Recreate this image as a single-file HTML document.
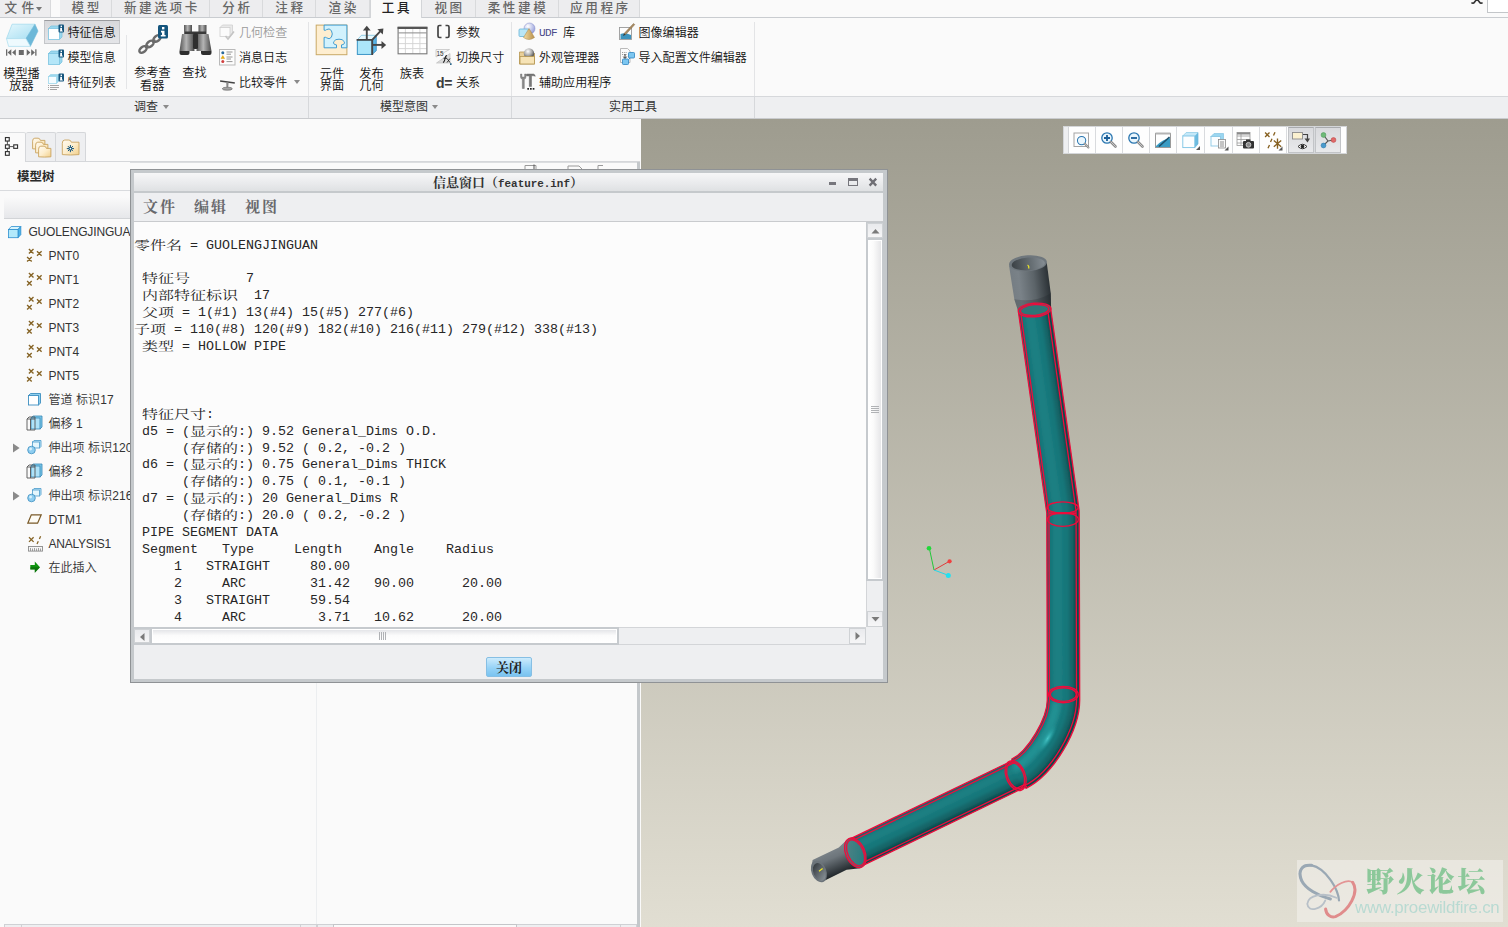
<!DOCTYPE html>
<html lang="zh-CN">
<head>
<meta charset="utf-8">
<title>信息窗口 (feature.inf)</title>
<style>
*{box-sizing:border-box;margin:0;padding:0}
html,body{width:1508px;height:927px;overflow:hidden;background:#fafafa}
body{position:relative;font-family:"Liberation Sans","Noto Sans CJK SC",sans-serif;font-size:12px;color:#1e1e1e}
.abs{position:absolute}
/* ---------- top tab bar ---------- */
#tabs{position:absolute;left:0;top:0;width:1508px;height:18px;background:#fafafa;border-bottom:1px solid #c9ccd0;z-index:2}
#tabs .t{position:absolute;top:0;height:17px;background:#ededef;border-right:1px solid #d9dadc;color:#666;font-size:12.6px;font-weight:500;line-height:16px;text-align:center;letter-spacing:2.6px;overflow:hidden;white-space:nowrap}
#tabs .t span{position:relative;top:0px;left:1.4px}
#tabs .t.on{background:#fafafa;color:#222;height:18px;border-left:1px solid #d3d5d8;border-right:1px solid #d3d5d8}
/* ---------- ribbon ---------- */
#ribbon{position:absolute;left:0;top:17px;width:1508px;height:80px;background:#fafafa}
#glabels{position:absolute;left:0;top:96px;width:1508px;height:23px;background:#eeeff1;border-top:1px solid #d6d8db;border-bottom:1px solid #c9cbce}
.gl{position:absolute;top:0;height:21px;line-height:20px;font-size:12px;color:#333;text-align:center;border-right:1px solid #d6d8db;white-space:nowrap}
.gsep{position:absolute;top:22px;width:1px;height:74px;background:#e3e4e6}
.rt{position:absolute;margin-top:1px;font-size:12.05px;line-height:12px;font-weight:350;color:#111;white-space:nowrap}
.rt.dis{color:#9a9a9a}
.rt2{position:absolute;margin-top:1px;font-size:12.2px;line-height:12.5px;font-weight:350;color:#111;text-align:center;white-space:nowrap}
.tri{position:absolute;width:0;height:0;border-left:4px solid transparent;border-right:4px solid transparent;border-top:4px solid #8a8a8a}
/* ---------- left panel ---------- */
#left{position:absolute;left:0;top:119px;width:641px;height:808px;background:#fafafa}
#split{position:absolute;left:637px;top:162px;width:3px;height:765px;background:#c4c8cb}
.ti{position:absolute;left:48px;font-size:12px;font-weight:350;margin-left:1px;line-height:16px;color:#333;white-space:nowrap}
/* ---------- viewport ---------- */
#view{position:absolute;left:641px;top:119px;width:867px;height:808px;background:linear-gradient(#9e9c8f,#e1ded2)}
/* ---------- dialog ---------- */

#dlg{position:absolute;left:130px;top:169px;width:758px;height:514px;background:#c5c9cc;border:1px solid #8f9295}
#dtitle{position:absolute;left:3px;top:3px;width:749px;height:18px;background:linear-gradient(#f6f6f7,#ebecee 50%,#dfe1e3);}
#dtitle .tt{position:absolute;left:-1px;width:750px;top:4px;text-align:center;font-family:"Liberation Mono","Noto Serif CJK SC",serif;font-weight:bold;font-size:13px;line-height:14px;color:#333;white-space:nowrap}
#dtitle .tt b{font-size:10.9px;letter-spacing:0}
#dmenu{position:absolute;left:3px;top:23px;width:749px;height:29px;background:#eeeff1;border-bottom:1px solid #c9cbce;font-family:"Noto Serif CJK SC","Liberation Serif",serif;font-weight:bold;font-size:15px;letter-spacing:2px;color:#68686c;line-height:28px;white-space:pre}
#dtext{position:absolute;left:3px;top:52px;width:732px;height:405px;background:#fcfcfc;overflow:hidden}
#dtext pre{position:absolute;left:0px;top:15.5px;font-family:"Liberation Mono","Noto Serif CJK SC",monospace;font-size:13.33px;line-height:16.92px;color:#262626;white-space:pre}
#dtext pre i{font-style:normal;display:inline-block;font-size:16px;line-height:16.92px;height:16.92px;vertical-align:top;font-weight:400;transform:scaleY(0.78);transform-origin:50% 78%;position:relative;top:0px}
#dbot{position:absolute;left:3px;top:457px;width:749px;height:52px;background:#eeeff1}
.sbtn{position:absolute;z-index:1;background:linear-gradient(#e9eaed,#f6f6f7);border:1px solid #cfd2d5}
#dmenu span{position:absolute;top:-1px}
#left svg{overflow:visible}
</style>
</head>
<body>
<div id="tabs">
<div class="t" style="left:0;width:50.5px;text-align:left;padding-left:3px;letter-spacing:4.4px"><span>文件</span><i class="tri" style="left:36px;top:6.5px;border-top-color:#777;border-left-width:3.5px;border-right-width:3.5px"></i></div>
<div class="t" style="left:59.5px;width:52.5px"><span>模型</span></div>
<div class="t" style="left:112px;width:98px"><span>新建选项卡</span></div>
<div class="t" style="left:210px;width:53px"><span>分析</span></div>
<div class="t" style="left:263px;width:53px"><span>注释</span></div>
<div class="t" style="left:316px;width:53.60000000000002px"><span>渲染</span></div>
<div class="t on" style="left:369.6px;width:52.099999999999966px"><span>工具</span></div>
<div class="t" style="left:421.7px;width:54.0px"><span>视图</span></div>
<div class="t" style="left:475.7px;width:82.90000000000003px"><span>柔性建模</span></div>
<div class="t" style="left:558.6px;width:81.89999999999998px"><span>应用程序</span></div>
<svg class="abs" style="left:1470px;top:0" width="14" height="6" viewBox="0 0 14 6"><path d="M1.5 2.5 Q3 4.5 5 1.5 L7 -1 L9 1.5 Q11 4.5 12.5 2.5" fill="none" stroke="#333" stroke-width="1.6"/></svg>
<div class="abs" style="left:1487px;top:-2px;width:30px;height:15px;background:#fff;border:1px solid #c3c6c9"></div>
</div>
<div id="ribbon">
<svg class="abs" style="left:5px;top:6px" width="34" height="34" viewBox="0 0 34 34"><defs><linearGradient id="gs1" x1="0" y1="0" x2="1" y2="1"><stop offset="0" stop-color="#e4f7fd"/><stop offset="1" stop-color="#a8dff2"/></linearGradient></defs>
<path d="M7.1 1.2 L30 1.2 L20.9 15.6 L1.5 15.6 Z" fill="url(#gs1)" stroke="#9fd9ec" stroke-width="0.7"/>
<path d="M30 1.2 L33 8.1 L25.4 23.4 L20.9 15.6 Z" fill="#6db8d8" stroke="#6db8d8" stroke-width="0.5"/>
<path d="M1.5 15.6 L20.9 15.6 L25.4 23.4 L3.6 23.4 Z" fill="#eefafe" stroke="#a8dcee" stroke-width="0.7"/>
<g fill="#6a6a6a"><rect x="1" y="26.3" width="1.3" height="6.4"/><path d="M6.3 26.3 L6.3 32.7 L2.6 29.5 Z"/><path d="M10.8 26.3 L10.8 32.7 L7.1 29.5 Z"/><rect x="13.8" y="27" width="5" height="5"/><path d="M21.7 26.3 L21.7 32.7 L25.4 29.5 Z"/><path d="M26.2 26.3 L26.2 32.7 L29.9 29.5 Z"/><rect x="30.2" y="26.3" width="1.3" height="6.4"/></g></svg>
<div class="rt2" style="left:-8.5px;width:60px;top:49.5px">模型播<br>放器</div>
<div class="abs" style="left:44px;top:3px;width:76px;height:24px;background:linear-gradient(#d7d8db,#e4e5e8);border:1px solid #c4c6c9;border-top:1px solid #9b9c9f"></div>
<svg class="abs" style="left:47px;top:6.5px" width="18" height="18" viewBox="0 0 18 18"><path d="M1.5 4.5 L4 2 L15 2 L15 13 L12.5 15.5 Z" fill="#9ad7ee" stroke="#7cc4e0" stroke-width="0.8"/><rect x="1.5" y="4.5" width="11" height="11" fill="#ffffff" stroke="#7cc4e0" stroke-width="0.8"/>
<rect x="11.5" y="0.5" width="5.5" height="8" rx="1" fill="#14557d"/><rect x="13.6" y="1.6" width="1.4" height="1.4" fill="#fff"/><rect x="13.2" y="3.8" width="1.8" height="3.2" fill="#fff"/><rect x="12.8" y="6.6" width="3" height="0.9" fill="#fff"/></svg>
<svg class="abs" style="left:47px;top:31.5px" width="18" height="18" viewBox="0 0 18 18"><path d="M1.5 4.5 L4 2 L15 2 L15 13 L12.5 15.5 Z" fill="#9ad7ee" stroke="#7cc4e0" stroke-width="0.8"/><rect x="1.5" y="4.5" width="11" height="11" fill="#b4e6f8" stroke="#7cc4e0" stroke-width="0.8"/>
<rect x="11.5" y="0.5" width="5.5" height="8" rx="1" fill="#14557d"/><rect x="13.6" y="1.6" width="1.4" height="1.4" fill="#fff"/><rect x="13.2" y="3.8" width="1.8" height="3.2" fill="#fff"/><rect x="12.8" y="6.6" width="3" height="0.9" fill="#fff"/></svg>
<svg class="abs" style="left:47px;top:56px" width="18" height="18" viewBox="0 0 18 18"><path d="M1.5 3.5 L3.5 1.5 L11.5 1.5 L11.5 8.5 L9.5 10.5 Z" fill="#9ad7ee" stroke="#9fd6ea" stroke-width="0.8"/><rect x="1.5" y="3.5" width="8" height="7" fill="#f4fcff" stroke="#9fd6ea" stroke-width="0.8"/>
<g stroke="#9a9a9a" stroke-width="0.9"><path d="M3 12.5 H12 M3 14.5 H12 M3 16.5 H10"/><path d="M1 12.5 H2 M1 14.5 H2 M1 16.5 H2"/></g>
<rect x="11.5" y="0.5" width="5.5" height="8" rx="1" fill="#14557d"/><rect x="13.6" y="1.6" width="1.4" height="1.4" fill="#fff"/><rect x="13.2" y="3.8" width="1.8" height="3.2" fill="#fff"/><rect x="12.8" y="6.6" width="3" height="0.9" fill="#fff"/></svg>
<div class="rt" style="left:67.5px;top:9px;">特征信息</div>
<div class="rt" style="left:67.5px;top:34px;">模型信息</div>
<div class="rt" style="left:67.5px;top:59px;">特征列表</div>
<div class="abs" style="left:126px;top:18px;width:1px;height:54px;background:#e4e5e7"></div>
<svg class="abs" style="left:137px;top:7px" width="32" height="32" viewBox="0 0 32 32"><g fill="none" stroke="#6b6b6b" stroke-width="2.4" stroke-linecap="round">
<ellipse cx="6" cy="25.5" rx="4.2" ry="2.6" transform="rotate(-38 6 25.5)"/>
<ellipse cx="13" cy="20" rx="4.2" ry="2.6" transform="rotate(-38 13 20)"/>
<ellipse cx="20" cy="14.5" rx="4.2" ry="2.6" transform="rotate(-38 20 14.5)"/>
<path d="M9 23 L10.5 22 M16 17.5 L17.5 16.5 M23 12 L25 8"/></g>
<rect x="21" y="1" width="10" height="13.5" rx="1.5" fill="#14557d"/><rect x="25" y="3" width="2.4" height="2.4" fill="#fff"/><path d="M24 6.8 H27.5 V11 H28.6 V12.6 H23.8 V11 H25 V8.4 H24 Z" fill="#fff"/></svg>
<div class="rt2" style="left:122.30000000000001px;width:60px;top:49px">参考查<br>看器</div>
<svg class="abs" style="left:179px;top:7px" width="33" height="32" viewBox="0 0 33 32"><defs><linearGradient id="gb1" x1="0" y1="0" x2="1" y2="0"><stop offset="0" stop-color="#555"/><stop offset="0.45" stop-color="#b4b4b4"/><stop offset="1" stop-color="#4a4a4a"/></linearGradient></defs>
<rect x="5" y="1" width="8" height="9" fill="url(#gb1)"/><rect x="19.5" y="1" width="8" height="9" fill="url(#gb1)"/>
<rect x="6" y="7.5" width="21" height="3" fill="#3a3a3a"/>
<path d="M3 10 L14 10 L15.5 27 L0.5 27 Z" fill="url(#gb1)"/><path d="M18.5 10 L29.5 10 L32.5 27 L17.5 27 Z" fill="url(#gb1)"/>
<rect x="14" y="9" width="5" height="16" rx="1.5" fill="#2f2f2f"/>
<path d="M0.5 27 H10.5 V29 Q10.5 31 8.5 31 H2.5 Q0.5 31 0.5 29 Z" fill="#2e2e2e"/><path d="M22 27 H32.5 V29 Q32.5 31 30.5 31 H24 Q22 31 22 29 Z" fill="#2e2e2e"/></svg>
<div class="rt2" style="left:164.5px;width:60px;top:49px">查找</div>
<svg class="abs" style="left:219px;top:7px" width="17" height="17" viewBox="0 0 17 17"><path d="M1 3.5 L3.5 1 L13.5 1 L13.5 10 L11 12.5 Z" fill="#e9e9e9" stroke="#cfcfcf" stroke-width="0.8"/><rect x="1" y="3.5" width="10" height="9" fill="#fbfbfb" stroke="#cfcfcf" stroke-width="0.8"/><path d="M6.5 12 L9 15 L15 7.5" fill="none" stroke="#c4c4c4" stroke-width="1.6"/></svg>
<div class="rt dis" style="left:239px;top:9px;">几何检查</div>
<svg class="abs" style="left:219px;top:32px" width="17" height="17" viewBox="0 0 17 17"><rect x="0.5" y="0.5" width="15.5" height="15.5" fill="#fdfdfd" stroke="#b9b9b9"/><circle cx="3.8" cy="3.8" r="1.5" fill="#2a6a9a"/><path d="M2 9.6 L3.8 6.6 L5.6 9.6 Z" fill="#f0b000" stroke="#c88a00" stroke-width="0.4"/><circle cx="3.8" cy="12.6" r="1.5" fill="#d04040"/><g stroke="#8a8a8a" stroke-width="0.9"><path d="M7.5 3 H13.5 M7.5 5.2 H12 M7.5 8 H13.5 M7.5 10 H12 M7.5 12.6 H13.5"/></g></svg>
<div class="rt" style="left:239px;top:34px;">消息日志</div>
<svg class="abs" style="left:219px;top:60px" width="17" height="14" viewBox="0 0 17 14"><path d="M1.1 3.9 L15.8 6.1" stroke="#444" stroke-width="1.5"/><path d="M7.2 5 L9.6 5.4 L9.2 10.8 H7.5 Z" fill="#8a8a8a"/><ellipse cx="8.3" cy="11.7" rx="5" ry="1.5" fill="#a4a4a4" stroke="#6a6a6a" stroke-width="0.7"/></svg>
<div class="rt" style="left:239px;top:59px;">比较零件</div>
<i class="tri" style="left:293.5px;top:63px;border-left-width:3.5px;border-right-width:3.5px"></i>
<svg class="abs" style="left:315px;top:7px" width="33" height="33" viewBox="0 0 33 33"><rect x="1.2" y="1.1" width="30.7" height="29.6" fill="#feeed0" stroke="#c9a866" stroke-width="1"/>
<path d="M9.1 1.1 H31.9 V23.8 H26.5 V20.9 Q30.4 20.4 29.2 17.6 Q27.6 14.9 24 15.2 Q20.4 14.9 18.8 17.6 Q17.6 20.4 21.5 20.9 V23.8 H9.1 V13.4 Q11 13 11.6 13.8 Q14.2 16 16.4 13.2 Q18.2 10 16.4 6.6 Q14.2 3.8 11.6 5.6 Q11 6.6 9.1 6.2 Z" fill="#d2f2fd" stroke="#2f94d0" stroke-width="0.9"/></svg>
<div class="rt2" style="left:302px;width:60px;top:49.5px">元件<br>界面</div>
<svg class="abs" style="left:356px;top:8px" width="31" height="31" viewBox="0 0 31 31"><path d="M1.3 14.9 L5.4 10.3 L20.3 10.3 L16.2 14.9 Z" fill="#e6f8fe" stroke="#6ab9da" stroke-width="0.7"/><path d="M16.2 14.9 L20.3 10.6 L20.3 25.7 L16.2 29.4 Z" fill="#5ab4e6" stroke="#2a82b8" stroke-width="0.7"/><rect x="1.3" y="14.9" width="14.9" height="14.5" fill="#ace6fa" stroke="#2a8ac0" stroke-width="0.9"/>
<g stroke="#454545" stroke-width="1.9" fill="none"><path d="M0.6 14.9 H16.2 V30"/><path d="M10.8 14.9 V4.5"/><path d="M16.2 14.9 L24.2 6.4"/><path d="M16.2 19.9 H26.5"/></g>
<g fill="#454545"><path d="M6.9 5.6 L10.8 0.8 L14.7 5.6 Z"/><path d="M21.4 4.3 L27.4 3.5 L26.8 9.6 Z"/><path d="M25.5 15.9 L30.2 19.9 L25.5 23.9 Z"/></g></svg>
<div class="rt2" style="left:341.5px;width:60px;top:49.5px">发布<br>几何</div>
<svg class="abs" style="left:397px;top:9px" width="31" height="29" viewBox="0 0 31 29"><rect x="1.1" y="1.3" width="28.8" height="26.5" fill="#fff"/><g stroke="#d2d2d2" stroke-width="0.9"><path d="M1.5 11.8 H29.5 M1.5 17.6 H29.5 M1.5 22.6 H29.5 M8.4 2 V27.5 M15.8 2 V27.5 M22.9 2 V27.5"/></g><path d="M1.5 6.9 H29.5" stroke="#8a8a8a" stroke-width="1"/><rect x="1.1" y="1.3" width="28.8" height="26.5" fill="none" stroke="#787878" stroke-width="1.1"/><rect x="0.6" y="0.8" width="29.8" height="2.2" fill="#555"/></svg>
<div class="rt2" style="left:382px;width:60px;top:49.5px">族表</div>
<svg class="abs" style="left:436px;top:7px" width="16" height="16" viewBox="0 0 16 16"><path d="M5.5 1.5 H3.5 Q2 1.5 2 3 V12 Q2 13.5 3.5 13.5 H5.5 M9.5 1.5 H11.5 Q13 1.5 13 3 V12 Q13 13.5 11.5 13.5 H9.5" fill="none" stroke="#444" stroke-width="1.7"/></svg>
<div class="rt" style="left:456px;top:9px;">参数</div>
<svg class="abs" style="left:435px;top:31px" width="18" height="18" viewBox="0 0 18 18"><path d="M1 1.5 H14.5 L1 9 Z" fill="#f6f6f6" stroke="#bdbdbd" stroke-width="0.7"/><path d="M15 5.5 V15 H1.5 Z" fill="#dcdcdc" stroke="#bdbdbd" stroke-width="0.7"/><text x="1.6" y="8" font-size="7.5" font-family="Liberation Sans,sans-serif" fill="#333" textLength="7" lengthAdjust="spacingAndGlyphs">15</text><path d="M8 14.5 Q9.5 14 10 10.5 Q10.5 7.5 12 7.5 M8.6 10.2 H12" stroke="#222" stroke-width="1.1" fill="none"/><path d="M12 10.5 L15 14.5 M15 10.5 L12 14.5" stroke="#222" stroke-width="0.9"/><rect x="15" y="15.3" width="1.6" height="1.6" fill="#14557d"/></svg>
<div class="rt" style="left:456px;top:34px;">切换尺寸</div>
<div class="rt" style="left:436px;top:58px;font-family:'Liberation Sans',sans-serif;font-weight:bold;font-size:14px;line-height:14px;letter-spacing:-0.3px;color:#3c3c3c">d=</div>
<div class="rt" style="left:456px;top:59px;">关系</div>
<svg class="abs" style="left:518px;top:5px" width="19" height="19" viewBox="0 0 19 19"><defs><radialGradient id="gsph" cx="0.35" cy="0.3" r="0.8"><stop offset="0" stop-color="#fff"/><stop offset="1" stop-color="#8c96d8"/></radialGradient><linearGradient id="gcone" x1="0" y1="0" x2="1" y2="0"><stop offset="0" stop-color="#f3dca4"/><stop offset="1" stop-color="#b8904a"/></linearGradient></defs>
<circle cx="11.5" cy="6.5" r="5.5" fill="url(#gsph)" stroke="#8088c8" stroke-width="0.5"/><rect x="1" y="7" width="10" height="7.5" rx="1" fill="#b9e6f7" stroke="#68b4d8" stroke-width="0.8"/><path d="M11 6.5 L16.5 15.5 Q11 19.5 5.5 15.5 Z" fill="url(#gcone)" stroke="#a88444" stroke-width="0.5"/></svg>
<div class="rt" style="left:539px;top:9px;font-family:'Liberation Mono','Noto Serif CJK SC',monospace;font-size:11px;letter-spacing:-0.6px;color:#4a4a8a">UDF</div>
<div class="rt" style="left:563px;top:9px;">库</div>
<svg class="abs" style="left:518px;top:30px" width="19" height="19" viewBox="0 0 19 19"><defs><radialGradient id="gsp2" cx="0.4" cy="0.3" r="0.75"><stop offset="0" stop-color="#fff"/><stop offset="0.5" stop-color="#aaa"/><stop offset="1" stop-color="#333"/></radialGradient></defs>
<path d="M1.5 5 H7 L8 6.5 H16.5 V17 H1.5 Z" fill="#e9cf98" stroke="#b59650" stroke-width="0.8"/><circle cx="11" cy="6.5" r="5.2" fill="url(#gsp2)"/><rect x="2" y="9.5" width="14.5" height="7.5" fill="#f6e3b6" stroke="#b59650" stroke-width="0.8"/></svg>
<div class="rt" style="left:539px;top:34px;">外观管理器</div>
<svg class="abs" style="left:518px;top:55px" width="19" height="19" viewBox="0 0 19 19"><path d="M2.5 2 V5 Q2.5 7 4.3 7 V16.5 H6.3 V7 Q8 7 8 5 V2 H6.6 V5 H3.9 V2 Z" fill="#8a8a8a" stroke="#666" stroke-width="0.4"/><path d="M8.5 2 H15.5 Q17 2.3 17.3 4.3 L15.5 3.8 H13.5 V14.5 H11.3 V4 H8.5 Z" fill="#777" stroke="#555" stroke-width="0.4"/><g fill="#222"><rect x="9.3" y="16" width="1.7" height="1.7"/><rect x="12" y="16" width="1.7" height="1.7"/><rect x="14.7" y="16" width="1.7" height="1.7"/></g></svg>
<div class="rt" style="left:539px;top:59px;">辅助应用程序</div>
<svg class="abs" style="left:618px;top:5px" width="19" height="19" viewBox="0 0 19 19"><rect x="1.5" y="5.5" width="12" height="12" fill="#fdfdfd" stroke="#9a9a9a" stroke-width="0.9"/><path d="M2.5 12 Q7 10 13 13 V17 H2.5 Z" fill="#3b93bd"/><path d="M6 11.5 L15.5 1.5 L16.8 2.6 L7.5 12.8 Z" fill="#a98a60" stroke="#6d5636" stroke-width="0.4"/><path d="M6 11.5 L7.5 12.8 L5 14 Z" fill="#333"/></svg>
<div class="rt" style="left:638.5px;top:9px;">图像编辑器</div>
<svg class="abs" style="left:618px;top:30px" width="19" height="19" viewBox="0 0 19 19"><path d="M2.5 1.5 H9.5 L12 4 V15.5 H2.5 Z" fill="#fbfbfb" stroke="#a9a9a9" stroke-width="0.8"/><g stroke="#888" stroke-width="0.8" stroke-dasharray="1.2 1"><path d="M4 5.5 H9 M4 7.5 H9"/></g><path d="M7 7 V11 M5.3 9.6 L7 11.6 L8.7 9.6" stroke="#333" stroke-width="1" fill="none"/><rect x="10.5" y="5.5" width="6" height="5.5" rx="0.8" fill="#7cc6f0" stroke="#2d84c0" stroke-width="0.8"/><rect x="4.5" y="12" width="6" height="5.5" rx="0.8" fill="#7cc6f0" stroke="#2d84c0" stroke-width="0.8"/><path d="M10.5 12.5 L12 11" stroke="#2d84c0" stroke-width="0.8"/></svg>
<div class="rt" style="left:638.5px;top:34px;">导入配置文件编辑器</div>
<div class="gsep" style="left:308px;top:5px"></div>
<div class="gsep" style="left:511px;top:5px"></div>
<div class="gsep" style="left:754px;top:5px"></div>
</div>
<div id="glabels">
<div class="gl" style="left:0;width:309px"><span style="position:relative;left:-8px">调查</span><i class="tri" style="left:162.5px;top:8px;border-left-width:3.5px;border-right-width:3.5px"></i></div>
<div class="gl" style="left:309px;width:203px"><span style="position:relative;left:-6px">模型意图</span><i class="tri" style="left:122.5px;top:8px;border-left-width:3.5px;border-right-width:3.5px"></i></div>
<div class="gl" style="left:512px;width:243px">实用工具</div>
</div>
<div id="left">
<div class="abs" style="left:0px;top:42px;width:640px;height:1px;background:#d5d7da"></div>
<div class="abs" style="left:0px;top:13px;width:26px;height:30px;background:#fafafa;border-right:1px solid #d5d7da;border-top:1px solid #dcdee0;border-radius:0 2px 0 0"></div>
<div class="abs" style="left:26px;top:13px;width:30px;height:29px;background:#eeeff1;border:1px solid #d5d7da;border-bottom:none;border-left:none;border-radius:2px 2px 0 0"></div>
<div class="abs" style="left:56px;top:13px;width:30px;height:29px;background:#eeeff1;border:1px solid #d5d7da;border-bottom:none;border-left:none;border-radius:2px 2px 0 0"></div>
<svg class="abs" style="left:4px;top:17px" width="16" height="22" viewBox="0 0 16 22"><path d="M3.4 5 V8.8 M3.4 12.4 V15.6 M5.8 10.6 H9.2" stroke="#555" stroke-width="1"/><g fill="#fff" stroke="#333" stroke-width="1.15"><rect x="1.45" y="1.55" width="3.8" height="3.5"/><rect x="1.45" y="8.85" width="3.8" height="3.5"/><rect x="1.45" y="15.6" width="3.8" height="3.7"/><rect x="9.75" y="8.85" width="3.8" height="3.5"/></g></svg>
<svg class="abs" style="left:31px;top:18px" width="22" height="22" viewBox="0 0 22 22"><defs><linearGradient id="gfo" x1="0" y1="0" x2="1" y2="1"><stop offset="0" stop-color="#fffaf0"/><stop offset="0.5" stop-color="#fdeecd"/><stop offset="1" stop-color="#f1cf8a"/></linearGradient></defs><path d="M1.6 4.2 Q1.6 1.2 3.8000000000000003 1.2 H7.1 Q8.9 1.2 9.4 3.4000000000000004 H13.9 V11.799999999999999 Q7.6 12.399999999999999 1.6 11.799999999999999 Z" fill="url(#gfo)" stroke="#c9a460" stroke-width="0.9"/><path d="M4.6 8.2 Q4.6 5.2 6.8 5.2 H10.1 Q11.899999999999999 5.2 12.399999999999999 7.4 H16.9 V15.8 Q10.6 16.4 4.6 15.8 Z" fill="url(#gfo)" stroke="#c9a460" stroke-width="0.9"/><path d="M7.6 12.2 Q7.6 9.2 9.8 9.2 H13.1 Q14.899999999999999 9.2 15.399999999999999 11.399999999999999 H19.9 V19.799999999999997 Q13.6 20.4 7.6 19.799999999999997 Z" fill="url(#gfo)" stroke="#c9a460" stroke-width="0.9"/></svg>
<svg class="abs" style="left:61px;top:20px" width="20" height="18" viewBox="0 0 20 18"><path d="M1.3 4.2 Q1.3 1 3.8 1 H7.8 Q9.8 1 10.3 3.2 H18 V15.6 Q9.5 16.4 1.3 15.6 Z" fill="url(#gfo)" stroke="#c9a460" stroke-width="0.9"/><g stroke="#14557d" stroke-width="1"><path d="M9.4 6 V13.2 M5.8 9.6 H13 M6.9 7.1 L11.9 12.1 M11.9 7.1 L6.9 12.1"/></g><circle cx="9.4" cy="9.6" r="1.9" fill="#14557d"/><circle cx="9.4" cy="9.6" r="0.9" fill="#fff"/></svg>
<div class="abs" style="left:17px;top:51px;font-size:12.5px;line-height:14px;font-weight:bold;color:#2a2a2a;font-family:'Liberation Sans','Noto Sans CJK SC',sans-serif">模型树</div>
<div class="abs" style="left:130px;top:43px;width:507px;height:1px;background:#dcdee0"></div>
<svg class="abs" style="left:524px;top:45px" width="80" height="6" viewBox="0 0 80 6"><g fill="none" stroke="#9a9a9a" stroke-width="1"><path d="M1 5 V1.5 H12 V5"/><path d="M10 0.5 V5" stroke="#555"/><path d="M44 5 V2 H55 L58 5"/><path d="M74 5 V1.5 H79"/></g></svg>
<div class="abs" style="left:0px;top:71px;width:637px;height:1px;background:#d9dbde"></div>
<div class="abs" style="left:4px;top:78px;width:633px;height:22px;background:linear-gradient(#fafafa,#e6e7ea);border-bottom:1px solid #d2d4d7"></div>
<svg class="abs" style="left:7px;top:104px" width="17" height="16" viewBox="0 0 17 16"><path d="M1.5 6.5 L4.2 3.5 L13.8 3.5 L11 6.5 Z" fill="#d6f4fd" stroke="#2d8fcf" stroke-width="0.8"/><path d="M11 6.5 L13.8 3.5 L13.8 11.7 L11 14.7 Z" fill="#4db4e8" stroke="#2d8fcf" stroke-width="0.8"/><rect x="1.5" y="6.5" width="9.5" height="8.2" fill="#b2e9fb" stroke="#2d8fcf" stroke-width="0.8"/></svg>
<div class="ti" style="left:27.4px;top:105px;letter-spacing:-0.15px">GUOLENGJINGUAN</div>
<svg class="abs" style="left:26px;top:128px" width="17" height="16" viewBox="0 0 17 16"><path d="M2.9000000000000004 1.9000000000000004 L7.5 6.5 M7.5 1.9000000000000004 L2.9000000000000004 6.5 M11.0 4.2 L15.600000000000001 8.8 M15.600000000000001 4.2 L11.0 8.8 M1.1 10.0 L5.699999999999999 14.600000000000001 M5.699999999999999 10.0 L1.1 14.600000000000001" stroke="#866426" stroke-width="1.35" fill="none"/></svg>
<div class="ti" style="left:47.4px;top:129px;letter-spacing:0">PNT0</div>
<svg class="abs" style="left:26px;top:152px" width="17" height="16" viewBox="0 0 17 16"><path d="M2.9000000000000004 1.9000000000000004 L7.5 6.5 M7.5 1.9000000000000004 L2.9000000000000004 6.5 M11.0 4.2 L15.600000000000001 8.8 M15.600000000000001 4.2 L11.0 8.8 M1.1 10.0 L5.699999999999999 14.600000000000001 M5.699999999999999 10.0 L1.1 14.600000000000001" stroke="#866426" stroke-width="1.35" fill="none"/></svg>
<div class="ti" style="left:47.4px;top:153px;letter-spacing:0">PNT1</div>
<svg class="abs" style="left:26px;top:176px" width="17" height="16" viewBox="0 0 17 16"><path d="M2.9000000000000004 1.9000000000000004 L7.5 6.5 M7.5 1.9000000000000004 L2.9000000000000004 6.5 M11.0 4.2 L15.600000000000001 8.8 M15.600000000000001 4.2 L11.0 8.8 M1.1 10.0 L5.699999999999999 14.600000000000001 M5.699999999999999 10.0 L1.1 14.600000000000001" stroke="#866426" stroke-width="1.35" fill="none"/></svg>
<div class="ti" style="left:47.4px;top:177px;letter-spacing:0">PNT2</div>
<svg class="abs" style="left:26px;top:200px" width="17" height="16" viewBox="0 0 17 16"><path d="M2.9000000000000004 1.9000000000000004 L7.5 6.5 M7.5 1.9000000000000004 L2.9000000000000004 6.5 M11.0 4.2 L15.600000000000001 8.8 M15.600000000000001 4.2 L11.0 8.8 M1.1 10.0 L5.699999999999999 14.600000000000001 M5.699999999999999 10.0 L1.1 14.600000000000001" stroke="#866426" stroke-width="1.35" fill="none"/></svg>
<div class="ti" style="left:47.4px;top:201px;letter-spacing:0">PNT3</div>
<svg class="abs" style="left:26px;top:224px" width="17" height="16" viewBox="0 0 17 16"><path d="M2.9000000000000004 1.9000000000000004 L7.5 6.5 M7.5 1.9000000000000004 L2.9000000000000004 6.5 M11.0 4.2 L15.600000000000001 8.8 M15.600000000000001 4.2 L11.0 8.8 M1.1 10.0 L5.699999999999999 14.600000000000001 M5.699999999999999 10.0 L1.1 14.600000000000001" stroke="#866426" stroke-width="1.35" fill="none"/></svg>
<div class="ti" style="left:47.4px;top:225px;letter-spacing:0">PNT4</div>
<svg class="abs" style="left:26px;top:248px" width="17" height="16" viewBox="0 0 17 16"><path d="M2.9000000000000004 1.9000000000000004 L7.5 6.5 M7.5 1.9000000000000004 L2.9000000000000004 6.5 M11.0 4.2 L15.600000000000001 8.8 M15.600000000000001 4.2 L11.0 8.8 M1.1 10.0 L5.699999999999999 14.600000000000001 M5.699999999999999 10.0 L1.1 14.600000000000001" stroke="#866426" stroke-width="1.35" fill="none"/></svg>
<div class="ti" style="left:47.4px;top:249px;letter-spacing:0">PNT5</div>
<svg class="abs" style="left:26px;top:272px" width="17" height="16" viewBox="0 0 17 16"><path d="M2.5 4.5 L4.5 2.5 L14.5 2.5 L14.5 12 L12.5 14 Z" fill="#8fd0ee" stroke="#3d8fc0" stroke-width="0.9"/><rect x="2.5" y="4.5" width="10" height="9.5" fill="#fff" stroke="#3d8fc0" stroke-width="0.9"/></svg>
<div class="ti" style="left:47.4px;top:273px;letter-spacing:0.1px">管道 标识17</div>
<svg class="abs" style="left:26px;top:296px" width="17" height="16" viewBox="0 0 17 16"><path d="M5 3 L7 1 L16 1 L16 12 L14 14 Z" fill="#7ecbec" stroke="#3585b5" stroke-width="0.8"/><rect x="5" y="3" width="9" height="11" fill="#aee2f8" stroke="#3585b5" stroke-width="0.8"/><path d="M1 4 L3 2 H9 M1 4 V15 H9 M1 4 H9 M4.5 4 V15 M9 2 V15" fill="none" stroke="#555" stroke-width="0.9"/></svg>
<div class="ti" style="left:47.4px;top:297px;letter-spacing:0.1px">偏移 1</div>
<svg class="abs" style="left:26px;top:320px" width="17" height="16" viewBox="0 0 17 16"><path d="M6.5 3 L8 1.5 H15 V7.5 L13.5 9 Z" fill="#bfe6f8" stroke="#4a9aca" stroke-width="0.8"/><rect x="6.5" y="3" width="7" height="6" fill="#e4f6fd" stroke="#4a9aca" stroke-width="0.8"/><circle cx="5.5" cy="11" r="3.8" fill="#8ecdf0" stroke="#3d8fc0" stroke-width="0.8"/><circle cx="4.6" cy="10" r="1.4" fill="#d8f0fb"/></svg>
<div class="ti" style="left:47.4px;top:321px;letter-spacing:0.1px">伸出项 标识120</div>
<svg class="abs" style="left:11px;top:324px" width="9" height="10" viewBox="0 0 9 10"><path d="M2 0.6 L8.6 5 L2 9.4 Z" fill="#8a8a8a"/></svg>
<svg class="abs" style="left:26px;top:344px" width="17" height="16" viewBox="0 0 17 16"><path d="M5 3 L7 1 L16 1 L16 12 L14 14 Z" fill="#7ecbec" stroke="#3585b5" stroke-width="0.8"/><rect x="5" y="3" width="9" height="11" fill="#aee2f8" stroke="#3585b5" stroke-width="0.8"/><path d="M1 4 L3 2 H9 M1 4 V15 H9 M1 4 H9 M4.5 4 V15 M9 2 V15" fill="none" stroke="#555" stroke-width="0.9"/></svg>
<div class="ti" style="left:47.4px;top:345px;letter-spacing:0.1px">偏移 2</div>
<svg class="abs" style="left:26px;top:368px" width="17" height="16" viewBox="0 0 17 16"><path d="M6.5 3 L8 1.5 H15 V7.5 L13.5 9 Z" fill="#bfe6f8" stroke="#4a9aca" stroke-width="0.8"/><rect x="6.5" y="3" width="7" height="6" fill="#e4f6fd" stroke="#4a9aca" stroke-width="0.8"/><circle cx="5.5" cy="11" r="3.8" fill="#8ecdf0" stroke="#3d8fc0" stroke-width="0.8"/><circle cx="4.6" cy="10" r="1.4" fill="#d8f0fb"/></svg>
<div class="ti" style="left:47.4px;top:369px;letter-spacing:0.1px">伸出项 标识216</div>
<svg class="abs" style="left:11px;top:372px" width="9" height="10" viewBox="0 0 9 10"><path d="M2 0.6 L8.6 5 L2 9.4 Z" fill="#8a8a8a"/></svg>
<svg class="abs" style="left:26px;top:392px" width="17" height="16" viewBox="0 0 17 16"><path d="M5.3 3.8 H15.2 L11.6 12.2 H1.8 Z" fill="#fdfbf5" stroke="#7a5a28" stroke-width="1.2"/></svg>
<div class="ti" style="left:47.4px;top:393px;letter-spacing:0.3px">DTM1</div>
<svg class="abs" style="left:26px;top:416px" width="17" height="16" viewBox="0 0 17 16"><g stroke="#866426" stroke-width="1.3" fill="none"><path d="M3 2.3 L7.6 6.9 M7.6 2.3 L3 6.9"/><path d="M14.6 1.3 L13.4 3.9 M12.3 6.2 L11 9"/></g><rect x="2.5" y="11.5" width="14" height="4.6" fill="#f6f6f6" stroke="#8a8a8a" stroke-width="0.9"/><path d="M4.5 13 V16 M6.5 13.5 V16 M8.5 13 V16 M10.5 13.5 V16 M12.5 13 V16 M14.5 13.5 V16" stroke="#8a8a8a" stroke-width="0.8"/></svg>
<div class="ti" style="left:47.4px;top:417px;letter-spacing:-0.2px">ANALYSIS1</div>
<svg class="abs" style="left:26px;top:440px" width="17" height="16" viewBox="0 0 17 16"><path d="M4.3 6 H8.8 V2.6 L14 8.2 L8.8 13.8 V10.4 H4.3 Z" fill="#0f930f"/><path d="M4.3 8.2 H14 L8.8 13.8 V10.4 H4.3 Z" fill="#0a5c0a" opacity="0.55"/></svg>
<div class="ti" style="left:47.4px;top:441px;letter-spacing:0.1px">在此插入</div>
<div class="abs" style="left:316px;top:564px;width:1px;height:244px;background:#eceef0"></div>
<div class="abs" style="left:4px;top:805px;width:313px;height:4px;background:#eeeff1;border:1px solid #cfd1d4"></div>
<div class="abs" style="left:317px;top:805px;width:320px;height:4px;background:#eeeff1;border:1px solid #cfd1d4"></div>
<div class="abs" style="left:21px;top:805px;width:1px;height:4px;background:#cfd1d4"></div>
<div class="abs" style="left:300px;top:805px;width:1px;height:4px;background:#cfd1d4"></div>
<div class="abs" style="left:333px;top:805px;width:184px;height:4px;background:#fafafa;border:1px solid #c4c6c9"></div>
<div class="abs" style="left:620px;top:805px;width:1px;height:4px;background:#cfd1d4"></div>
</div>
<div id="split"></div>
<div id="view">
<svg class="abs" style="left:0;top:0" width="867" height="808" viewBox="641 119 867 808">
<defs>
<filter id="bl" x="-20%" y="-20%" width="140%" height="140%"><feGaussianBlur stdDeviation="1.6"/></filter>
<filter id="bl2" x="-50%" y="-50%" width="200%" height="200%"><feGaussianBlur stdDeviation="2.2"/></filter>
<clipPath id="cpA"><path d="M1034.5 310 L1063 512 L1063.5 700 C1063.5 724 1041 763 1018.5 774" fill="none" stroke="#000" stroke-width="32.5" stroke-linecap="square" stroke-linejoin="round"/></clipPath>
<mask id="mA" maskUnits="userSpaceOnUse" x="641" y="119" width="867" height="808"><path d="M1034.5 310 L1063 512 L1063.5 700 C1063.5 724 1041 763 1018.5 774" fill="none" stroke="#fff" stroke-width="32.5" stroke-linejoin="round"/><path d="M1020.6 773 L854.5 853.2" fill="none" stroke="#fff" stroke-width="29.5"/></mask>
<mask id="mO" maskUnits="userSpaceOnUse" x="641" y="119" width="867" height="808"><path d="M1034.5 310 L1063 512 L1063.5 700 C1063.5 724 1041 763 1018.5 774" fill="none" stroke="#fff" stroke-width="33.7" stroke-linejoin="round"/><path d="M1034.5 310 L1063 512 L1063.5 700 C1063.5 724 1041 763 1018.5 774" fill="none" stroke="#000" stroke-width="31" stroke-linecap="square" stroke-linejoin="round"/></mask>
<mask id="mI" maskUnits="userSpaceOnUse" x="641" y="119" width="867" height="808"><path d="M1034.5 310 L1063 512 L1063.5 700 C1063.5 724 1041 763 1018.5 774" fill="none" stroke="#fff" stroke-width="28.4" stroke-linejoin="round"/><path d="M1034.5 310 L1063 512 L1063.5 700 C1063.5 724 1041 763 1018.5 774" fill="none" stroke="#000" stroke-width="25.8" stroke-linecap="square" stroke-linejoin="round"/></mask>
<mask id="mO2" maskUnits="userSpaceOnUse" x="641" y="119" width="867" height="808"><path d="M1020.6 773 L854.5 853.2" fill="none" stroke="#fff" stroke-width="30.8"/><path d="M1020.6 773 L854.5 853.2" fill="none" stroke="#000" stroke-width="28.1" stroke-linecap="square"/></mask>
<mask id="mI2" maskUnits="userSpaceOnUse" x="641" y="119" width="867" height="808"><path d="M1020.6 773 L854.5 853.2" fill="none" stroke="#fff" stroke-width="25.6"/><path d="M1020.6 773 L854.5 853.2" fill="none" stroke="#000" stroke-width="23" stroke-linecap="square"/></mask>
<linearGradient id="gcap" gradientUnits="userSpaceOnUse" x1="1009" y1="285" x2="1051" y2="280"><stop offset="0" stop-color="#747c82"/><stop offset="0.25" stop-color="#7a8288"/><stop offset="0.6" stop-color="#5c6469"/><stop offset="1" stop-color="#252b2f"/></linearGradient>
<linearGradient id="ghole" gradientUnits="userSpaceOnUse" x1="1012" y1="264" x2="1045" y2="262"><stop offset="0" stop-color="#3c4246"/><stop offset="0.5" stop-color="#60686d"/><stop offset="1" stop-color="#868e94"/></linearGradient>
<linearGradient id="gcap2" gradientUnits="userSpaceOnUse" x1="828" y1="850" x2="838" y2="874"><stop offset="0" stop-color="#7d858b"/><stop offset="0.35" stop-color="#6d757b"/><stop offset="1" stop-color="#23292d"/></linearGradient>
<linearGradient id="ghole2" gradientUnits="userSpaceOnUse" x1="814" y1="866" x2="824" y2="880"><stop offset="0" stop-color="#3a4044"/><stop offset="1" stop-color="#8a9298"/></linearGradient>
<linearGradient id="gend" x1="0" y1="0" x2="1" y2="1"><stop offset="0" stop-color="#5a8386"/><stop offset="1" stop-color="#1b7a7d"/></linearGradient><radialGradient id="gspec" cx="0.5" cy="0.5" r="0.5"><stop offset="0" stop-color="#5adada" stop-opacity="0.95"/><stop offset="0.5" stop-color="#2fb0b2" stop-opacity="0.5"/><stop offset="1" stop-color="#1f8a8c" stop-opacity="0"/></radialGradient>
</defs>
<!-- lower gray end -->
<path d="M848.5 838.2 L845.6 841 L838.8 847.4 L812.6 860 Q810 872 822.3 881.8 L846.6 869.7 L860.2 868.3 Z" fill="url(#gcap2)"/>
<ellipse cx="818.9" cy="871.5" rx="7.4" ry="11.3" transform="rotate(-22 818.9 871.5)" fill="#6c747a"/>
<ellipse cx="819.3" cy="872" rx="5.8" ry="9.3" transform="rotate(-22 819.3 872)" fill="url(#ghole2)"/>
<path d="M819 871.2 L822.6 868.6" stroke="#f4ee20" stroke-width="1.2"/>
<!-- upper gray cap -->
<path d="M1009 265.5 L1014.3 299.3 L1018.2 311.5 L1051.1 308.2 L1050.8 293.4 L1046.8 263 Z" fill="url(#gcap)"/>
<path d="M1014.3 299.3 L1018.2 311.5 L1051.1 308.2 L1050.8 293.4 Q1034 303 1014.3 299.3 Z" fill="#1c2226" opacity="0.22"/>
<ellipse cx="1028" cy="263.3" rx="19" ry="8" transform="rotate(-4 1028 263.3)" fill="#6f777d"/>
<ellipse cx="1028.3" cy="264" rx="16.6" ry="6.4" transform="rotate(-4 1028.3 264)" fill="url(#ghole)"/>
<path d="M1027.6 265 Q1029.3 266 1028.8 268.5" stroke="#f4ee20" stroke-width="1.2" fill="none"/>
<!-- teal pipe body -->
<g>
<path d="M1034.5 310 L1063 512 L1063.5 700 C1063.5 724 1041 763 1018.5 774" fill="none" stroke="#0a4b4d" stroke-width="32.5" stroke-linejoin="round"/>
<path d="M1020.6 773 L854.5 853.2" fill="none" stroke="#0a4b4d" stroke-width="29.5"/>
<g mask="url(#mA)">
<g filter="url(#bl)">
<path d="M1034.5 310 L1063 512 L1063.5 700 C1063.5 724 1041 763 1018.5 774" fill="none" stroke="#126669" stroke-width="27" stroke-linejoin="round" transform="translate(-2.6,-1.4)"/>
<path d="M1020.6 773 L854.5 853.2" fill="none" stroke="#126669" stroke-width="24" transform="translate(-2,-2.2)"/>
<path d="M1034.5 310 L1063 512 L1063.5 700 C1063.5 724 1041 763 1018.5 774" fill="none" stroke="#19777a" stroke-width="20" stroke-linejoin="round" transform="translate(-4.2,-2.2)"/>
<path d="M1020.6 773 L854.5 853.2" fill="none" stroke="#19777a" stroke-width="17" transform="translate(-3,-3.8)"/>
<path d="M1034.5 310 L1063 512 L1063.5 700 C1063.5 724 1041 763 1018.5 774" fill="none" stroke="#1c7f82" stroke-width="9" stroke-linejoin="round" transform="translate(-5.5,-3)"/>
<path d="M1020.6 773 L854.5 853.2" fill="none" stroke="#1c7f82" stroke-width="7" transform="translate(-3.5,-5)"/>
</g>
<ellipse cx="1047.5" cy="738.5" rx="5" ry="17" transform="rotate(32 1047.5 738.5)" fill="url(#gspec)"/>
<path d="M1061 705 C1060 730 1038 761 1018 771" fill="none" stroke="#27a0a2" stroke-width="9" opacity="0.55" filter="url(#bl2)" transform="translate(-5,-3)"/>
</g>
</g>
<!-- red outlines -->
<rect x="641" y="119" width="867" height="808" fill="#ee0c3c" mask="url(#mO)"/>
<g transform="translate(-0.5,-0.2)"><rect x="641" y="119" width="867" height="808" fill="#ee0c3c" mask="url(#mI)"/></g>
<rect x="641" y="119" width="867" height="808" fill="#ee0c3c" mask="url(#mO2)"/>
<rect x="641" y="119" width="867" height="808" fill="#ee0c3c" mask="url(#mI2)"/>
<g fill="none" stroke="#ee0c3c" stroke-width="1.35">
<ellipse cx="1034.6" cy="310" rx="16.4" ry="6.8" transform="rotate(-5 1034.6 310)" fill="#2f7677"/>
<ellipse cx="1034.6" cy="310" rx="14.2" ry="5.4" transform="rotate(-5 1034.6 310)"/>
<ellipse cx="1062.7" cy="507.6" rx="15.4" ry="5.8"/>
<ellipse cx="1062.9" cy="519.5" rx="15.4" ry="6.8"/>
<path d="M1049 513.3 H1076" stroke-width="2"/>
<ellipse cx="1063.4" cy="694.5" rx="14.8" ry="8.2"/>
<ellipse cx="1063.4" cy="694.5" rx="13" ry="6.8"/>
<ellipse cx="1015.6" cy="775.6" rx="9.5" ry="15.6" transform="rotate(-22 1015.6 775.6)"/>
<ellipse cx="1015.6" cy="775.6" rx="8" ry="13.6" transform="rotate(-22 1015.6 775.6)"/>
<ellipse cx="855.3" cy="852.8" rx="9.6" ry="15.6" transform="rotate(-24 855.3 852.8)" fill="url(#gend)"/>
<ellipse cx="855.6" cy="852.8" rx="7.8" ry="13.8" transform="rotate(-24 855.6 852.8)"/>
</g>
<!-- triad -->
<g stroke-width="1">
<path d="M934 570 L929.5 549" stroke="#22c83a"/><path d="M934 570 L949 561.5" stroke="#e03a3a"/><path d="M934 570 L947.5 575" stroke="#22d8e8"/>
</g>
<circle cx="929" cy="548.3" r="2.3" fill="#22d83a"/><circle cx="949.6" cy="561.3" r="2.1" fill="#f04040"/><circle cx="948.3" cy="575.6" r="2.5" fill="#22e0f0"/>
</svg>
<div class="abs" style="left:422px;top:7px;width:284px;height:28px;background:#fefefe;border:1px solid #d4d6d9"></div>
<div class="abs" style="left:423px;top:8px;width:5px;height:26px;background:#eeeff1;border-right:1px solid #d4d6d9"></div>
<div class="abs" style="left:453.5px;top:8px;width:1px;height:26px;background:#d9dbde"></div>
<div class="abs" style="left:480.7px;top:8px;width:1px;height:26px;background:#d9dbde"></div>
<div class="abs" style="left:508.0px;top:8px;width:1px;height:26px;background:#d9dbde"></div>
<div class="abs" style="left:534.8px;top:8px;width:1px;height:26px;background:#d9dbde"></div>
<div class="abs" style="left:562.7px;top:8px;width:1px;height:26px;background:#d9dbde"></div>
<div class="abs" style="left:590.7px;top:8px;width:1px;height:26px;background:#d9dbde"></div>
<div class="abs" style="left:618.0px;top:8px;width:1px;height:26px;background:#d9dbde"></div>
<div class="abs" style="left:645.4px;top:8px;width:1px;height:26px;background:#d9dbde"></div>
<div class="abs" style="left:672.7px;top:8px;width:1px;height:26px;background:#d9dbde"></div>
<div class="abs" style="left:647px;top:8px;width:26px;height:26px;background:linear-gradient(#d9dadd,#e8e9eb);border:1px solid #c2c4c7;border-top-color:#a9abae"></div>
<div class="abs" style="left:674px;top:8px;width:26px;height:26px;background:linear-gradient(#d9dadd,#e8e9eb);border:1px solid #c2c4c7;border-top-color:#a9abae"></div>
<svg class="abs" style="left:432px;top:13px" width="18" height="18" viewBox="0 0 18 18"><rect x="1" y="1" width="14.5" height="13.5" fill="#fdfdfd" stroke="#a4a4a4"/><g transform="translate(3,3) scale(0.8)"><circle cx="7" cy="7" r="5.2" fill="#eaf6fd" stroke="#2a76b0" stroke-width="1.3"/><path d="M11 11 L15.5 15.5" stroke="#8a8a8a" stroke-width="2.6" stroke-linecap="round"/><path d="M11 11 L15.5 15.5" stroke="#c8c8c8" stroke-width="1" stroke-linecap="round"/></g></svg>
<svg class="abs" style="left:459px;top:12px" width="18" height="18" viewBox="0 0 18 18"><circle cx="7" cy="7" r="5.2" fill="#eaf6fd" stroke="#2a76b0" stroke-width="1.3"/><path d="M4 7 H10 M7 4 V10" stroke="#1a5e98" stroke-width="1.8"/><path d="M11 11 L15.5 15.5" stroke="#8a8a8a" stroke-width="2.6" stroke-linecap="round"/><path d="M11 11 L15.5 15.5" stroke="#c8c8c8" stroke-width="1" stroke-linecap="round"/></svg>
<svg class="abs" style="left:486px;top:12px" width="18" height="18" viewBox="0 0 18 18"><circle cx="7" cy="7" r="5.2" fill="#eaf6fd" stroke="#2a76b0" stroke-width="1.3"/><path d="M4 7 H10" stroke="#1a5e98" stroke-width="1.8"/><path d="M11 11 L15.5 15.5" stroke="#8a8a8a" stroke-width="2.6" stroke-linecap="round"/><path d="M11 11 L15.5 15.5" stroke="#c8c8c8" stroke-width="1" stroke-linecap="round"/></svg>
<svg class="abs" style="left:514px;top:13px" width="17" height="17" viewBox="0 0 17 17"><rect x="0.5" y="1.5" width="15" height="14" fill="#3a9cc4" stroke="#9a9a9a"/><path d="M1 2 H15 V6 Q8 7 1 14 Z" fill="#fff"/><rect x="0.5" y="0.5" width="15" height="2" fill="#b4b4b4"/><path d="M4 14.5 L14.5 5" stroke="#1d4f6a" stroke-width="1.6"/></svg>
<svg class="abs" style="left:540px;top:12px" width="20" height="20" viewBox="0 0 20 20"><path d="M1.8 5 L5.3 1.5 L17 1.5 L17 13 L13.8 16.6 Z" fill="#6bbbe0" stroke="#6ab6d8" stroke-width="0.7"/><path d="M1.8 5 L5.3 1.5 L17 1.5 L13.8 5 Z" fill="#c4e8f8"/><rect x="1.8" y="5" width="12" height="11.6" fill="#fcfeff" stroke="#7cc4e4" stroke-width="0.9"/><path d="M19 15 V19 H15 Z" fill="#555"/></svg>
<svg class="abs" style="left:568px;top:12px" width="20" height="20" viewBox="0 0 20 20"><path d="M2 5.5 L5 2.5 L14.5 2.5 L14.5 12 L11.5 15 Z" fill="#9ad6f0" stroke="#8cc8e4" stroke-width="0.8"/><rect x="2" y="5.5" width="9.5" height="9.5" fill="#fafdff" stroke="#8cc8e4" stroke-width="0.9"/><rect x="9.5" y="8.5" width="7" height="8.5" fill="#f7f7f7" stroke="#8a8a8a" stroke-width="0.8"/><path d="M11 11 H15 M11 13 H15 M11 15 H15" stroke="#777" stroke-width="0.8"/><path d="M19.5 15.5 V19.5 H15.5 Z" fill="#555"/></svg>
<svg class="abs" style="left:595px;top:12px" width="20" height="20" viewBox="0 0 20 20"><rect x="1" y="1.5" width="13" height="13" fill="#fdfdfd" stroke="#9a9a9a" stroke-width="0.8"/><path d="M1 5 H14 M1 8.5 H14 M1 12 H14 M5 1.5 V14.5" stroke="#9a9a9a" stroke-width="0.8"/><rect x="1" y="1.5" width="13" height="2" fill="#8a8a8a"/><rect x="7" y="10" width="11" height="7.5" rx="1" fill="#333"/><rect x="10" y="8.5" width="4.5" height="2" fill="#333"/><circle cx="12.5" cy="13.8" r="2.4" fill="#888" stroke="#ddd" stroke-width="0.8"/></svg>
<svg class="abs" style="left:622px;top:12px" width="20" height="20" viewBox="0 0 20 20"><g stroke="#866020" stroke-width="1.35" fill="none"><path d="M2.1 1.6 L6.5 6 M6.5 1.6 L2.1 6"/><path d="M12 1.3 L10.5 4.5 M9 7.8 L7.5 11 M6.5 14 L5 17.2"/><path d="M14.5 7.5 V17.8 M10.8 9.6 L18.2 15.8 M18.2 9.6 L10.8 15.8"/></g><path d="M19.5 15.5 V19.5 H15.5 Z" fill="#555"/></svg>
<svg class="abs" style="left:650px;top:11px" width="21" height="22" viewBox="0 0 21 22"><rect x="1.5" y="2.5" width="10" height="6.5" fill="#fbf1d0" stroke="#8c8c8c" stroke-width="0.9"/><path d="M12 4.5 H16.5 V10" stroke="#444" stroke-width="1.2" fill="none"/><path d="M13.5 8.5 L16.5 12.5 L19 8.5 Z" fill="#444"/><path d="M7 16.5 Q11.5 12 16 16.5 Q11.5 21 7 16.5 Z" fill="#fff" stroke="#333" stroke-width="1"/><circle cx="11.5" cy="16.5" r="1.8" fill="#222"/></svg>
<svg class="abs" style="left:677px;top:11px" width="21" height="22" viewBox="0 0 21 22"><path d="M5.5 5 L10 11 L5.5 15.5 M10 11 L15.5 10" stroke="#555" stroke-width="1.1" fill="none"/><circle cx="5.5" cy="5" r="2.4" fill="#6fba78" stroke="#4a9a58" stroke-width="0.6"/><circle cx="5.5" cy="15.5" r="2.4" fill="#4a9acc" stroke="#2a7aac" stroke-width="0.6"/><circle cx="15.5" cy="10" r="2.4" fill="#e06a6a" stroke="#c04848" stroke-width="0.6"/></svg>
<div class="abs" style="left:656px;top:741px;width:206px;height:62px;background:rgba(244,243,238,0.55)"></div>
<svg class="abs" style="left:656px;top:741px" width="64" height="62" viewBox="0 0 64 62"><g fill="none" stroke-linecap="round">
<path d="M42.0 40.4 C41.1 28.4 28.3 7.9 14.6 5.3 C4.3 4.1 0.9 11.3 4.3 19.9" stroke="#9aa8b4" stroke-width="2.2"/>
<path d="M14.6 5.3 C4.3 4.1 0.9 11.3 4.3 19.9 C7.7 28.4 21.4 36.1 33.4 39.0" stroke="#9aa8b4" stroke-width="3"/>
<path d="M33.4 31.9 C38.5 25.0 50.5 18.2 55.7 22.4" stroke="#e39494" stroke-width="1.8"/>
<path d="M55.7 22.4 C62.5 31.9 52.2 50.7 38.5 56.7 C33.4 58.4 29.1 54.1 28.6 49.0" stroke="#e08c8c" stroke-width="3"/>
<path d="M39.4 37.8 C26.6 31.9 11.2 35.3 10.3 43.8 C11.2 53.2 24.9 49.0 28.3 40.4" stroke="#b8c0c8" stroke-width="1.8"/>
</g></svg>
<div class="abs" style="left:725px;top:745px;width:122px;height:32px;font-family:'Noto Serif CJK SC','Noto Sans CJK SC',serif;font-weight:900;font-size:28px;line-height:32px;letter-spacing:2.4px;color:#8cc89a;white-space:nowrap">野火论坛</div>
<div class="abs" style="left:714px;top:778px;font-family:'Liberation Sans',sans-serif;font-size:16.9px;line-height:22px;color:#b9dad2;white-space:nowrap;letter-spacing:-0.25px">www.proewildfire.cn</div>
</div>
<div id="dlg">
<div id="dbot"></div>
<div id="dtitle"><div class="tt">信息窗口（<b>feature.inf</b>）</div><div class="abs" style="left:695px;top:9px;width:7px;height:3px;background:#76767c"></div><div class="abs" style="left:714px;top:5px;width:10px;height:8px;border:1px solid #76767c;border-top:3px solid #76767c"></div><svg class="abs" style="left:734px;top:4px" width="10" height="11" viewBox="0 0 10 11"><path d="M1.6 1.6 L8.2 8.6 M8.2 1.6 L1.6 8.6" stroke="#6f6f75" stroke-width="2.3"/></svg></div>
<div id="dmenu"><span style="left:9px">文件</span><span style="left:60px">编辑</span><span style="left:111px">视图</span></div>
<div id="dtext"><pre><i>零件名</i> = GUOLENGJINGUAN

 <i>特征号</i>       7
 <i>内部特征标识</i>  17
 <i>父项</i> = 1(#1) 13(#4) 15(#5) 277(#6)
<i>子项</i> = 110(#8) 120(#9) 182(#10) 216(#11) 279(#12) 338(#13)
 <i>类型</i> = HOLLOW PIPE



 <i>特征尺寸</i>:
 d5 = (<i>显示的</i>:) 9.52 General_Dims O.D.
      (<i>存储的</i>:) 9.52 ( 0.2, -0.2 )
 d6 = (<i>显示的</i>:) 0.75 General_Dims THICK
      (<i>存储的</i>:) 0.75 ( 0.1, -0.1 )
 d7 = (<i>显示的</i>:) 20 General_Dims R
      (<i>存储的</i>:) 20.0 ( 0.2, -0.2 )
 PIPE SEGMENT DATA
 Segment   Type     Length    Angle    Radius
     1   STRAIGHT     80.00
     2     ARC        31.42   90.00      20.00
     3   STRAIGHT     59.54
     4     ARC         3.71   10.62      20.00</pre></div>
<div class="abs" style="left:735px;top:52px;width:17px;height:405px;background:#eeeff1;border-left:1px solid #d3d5d8"></div>
<div class="sbtn" style="left:736px;top:53px;width:16px;height:15px"><svg width="15" height="15" viewBox="0 0 15 15"><path d="M3.5 9.5 L7.5 5 L11.5 9.5 Z" fill="#7a7a7a"/></svg></div>
<div class="sbtn" style="left:736px;top:441px;width:16px;height:16px"><svg width="15" height="14" viewBox="0 0 15 14"><path d="M3.5 5 L7.5 9.5 L11.5 5 Z" fill="#7a7a7a"/></svg></div>
<div class="abs" style="left:735px;top:52px;width:17px;height:359px;background:#c6cace"></div><div class="abs" style="left:737px;top:70px;width:14px;height:339px;background:linear-gradient(90deg,#ffffff,#fbfbfb 35%,#e6e6e8);border:1px solid #fff"></div>
<svg class="abs" style="left:740px;top:235px" width="8" height="10" viewBox="0 0 8 10"><path d="M0 1.5 H8 M0 3.5 H8 M0 5.5 H8 M0 7.5 H8" stroke="#b0b2b5" stroke-width="1"/></svg>
<div class="abs" style="left:3px;top:457px;width:732px;height:18px;background:#eeeff1;border-top:1px solid #d3d5d8;border-bottom:1px solid #d3d5d8"></div>
<div class="sbtn" style="left:3px;top:459px;width:16px;height:14px"><svg width="15" height="14" viewBox="0 0 15 14"><path d="M9.5 3 L5 7 L9.5 11 Z" fill="#7a7a7a"/></svg></div>
<div class="sbtn" style="left:718px;top:458px;width:17px;height:16px"><svg width="15" height="14" viewBox="0 0 15 14"><path d="M5.5 3 L10 7 L5.5 11 Z" fill="#7a7a7a"/></svg></div>
<div class="abs" style="left:3px;top:457px;width:485px;height:18px;background:#c6cace"></div><div class="abs" style="left:21px;top:459px;width:465px;height:14px;background:linear-gradient(#e4e5e8,#fbfbfb 45%,#ffffff);border:1px solid #fff"></div>
<svg class="abs" style="left:247px;top:462px" width="10" height="8" viewBox="0 0 10 8"><path d="M1.5 0 V8 M3.5 0 V8 M5.5 0 V8 M7.5 0 V8" stroke="#b0b2b5" stroke-width="1"/></svg>
<div class="abs" style="left:355px;top:487px;width:46px;height:20px;background:linear-gradient(#cdebfc,#96d3f7 55%,#7ac3f0);border:1px solid #86bfe4;border-radius:2px;text-align:center;font-family:'Noto Serif CJK SC',serif;font-weight:bold;font-size:13px;line-height:18px;color:#222">关闭</div>
</div>
</body>
</html>
